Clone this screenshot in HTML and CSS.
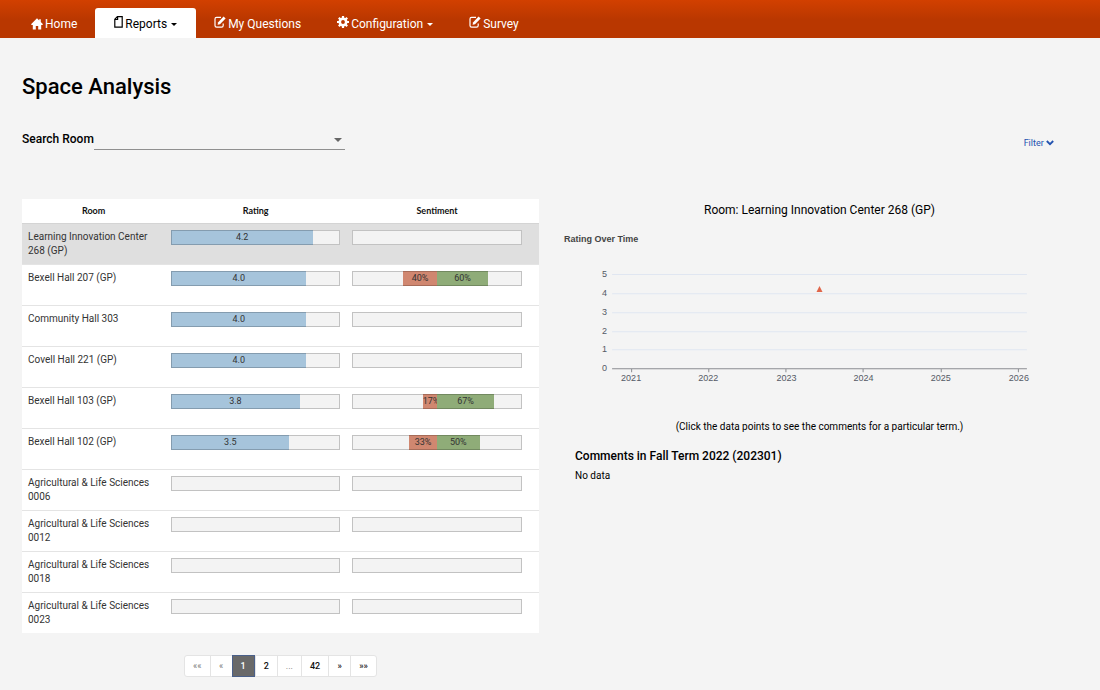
FILE: index.html
```html
<!DOCTYPE html>
<html lang="en">
<head>
    <meta charset="UTF-8">
    <meta name="viewport" content="width=device-width, initial-scale=1.0">
    <title>Space Analysis</title>
    <link rel="stylesheet" href="styles.css">
</head>
<body>
    <nav class="navbar">
        <a href="#">
            <svg class="icon" viewBox="0 0 12 12"><path d="M6 0.3 L0 6.2 L0.7 7 H1.8 V11.6 H4.8 V8 H7.2 V11.6 H10.2 V7 H11.3 L12 6.2 L9.8 4 V1.2 H8.2 V2.4 Z" fill="currentColor"/></svg>
            Home
        </a>
        <a href="#" class="active">
            <svg class="icon icon-file" viewBox="0 0 9 12"><path d="M3.4 0.7 H8.2 V11.2 H0.8 V3.3 Z M3.6 0.7 V3.5 H0.8" fill="none" stroke="currentColor" stroke-width="1.2"/></svg>
            Reports <span class="caret"></span>
        </a>
        <a href="#">
            <svg class="icon icon-edit" viewBox="0 0 12 12"><path d="M7 1.4 H2.6 Q1 1.4 1 3 V9.6 Q1 11.2 2.6 11.2 H7.6 Q9.2 11.2 9.2 9.6 V7.6" fill="none" stroke="currentColor" stroke-width="1.2"/><path d="M4 6.4 L9.6 0.6 L11.6 2.6 L6 8.2 L3.6 8.8 Z" fill="currentColor"/></svg>
            My Questions
        </a>
        <a href="#">
            <svg class="icon icon-cog" viewBox="0 0 12 12"><circle cx="6" cy="6" r="3.2" fill="none" stroke="currentColor" stroke-width="2.6"/><path d="M6 0 V2.6 M6 9.4 V12 M0 6 H2.6 M9.4 6 H12 M1.8 1.8 L3.6 3.6 M8.4 8.4 L10.2 10.2 M10.2 1.8 L8.4 3.6 M3.6 8.4 L1.8 10.2" stroke="currentColor" stroke-width="2.2"/></svg>
            Configuration <span class="caret"></span>
        </a>
        <a href="#">
            <svg class="icon icon-edit" viewBox="0 0 12 12"><path d="M7 1.4 H2.6 Q1 1.4 1 3 V9.6 Q1 11.2 2.6 11.2 H7.6 Q9.2 11.2 9.2 9.6 V7.6" fill="none" stroke="currentColor" stroke-width="1.2"/><path d="M4 6.4 L9.6 0.6 L11.6 2.6 L6 8.2 L3.6 8.8 Z" fill="currentColor"/></svg>
            Survey
        </a>
    </nav>

    <main class="container">
        <h1>Space Analysis</h1>

        <div class="toolbar">
            <div class="search">
                <label for="room">Search Room</label>
                <div class="select-wrap">
                    <select id="room">
                        <option value=""></option>
                    </select>
                    <span class="caret"></span>
                </div>
            </div>
            <a href="#" class="filter">Filter
                <svg viewBox="0 0 8 6"><path d="M0.8 1 L4 4.2 L7.2 1" fill="none" stroke="currentColor" stroke-width="1.8"/></svg>
            </a>
        </div>

        <div class="columns">
            <section>
                <table class="rooms">
                    <thead>
                        <tr><th class="col-room">Room</th><th class="col-rating">Rating</th><th>Sentiment</th></tr>
                    </thead>
                    <tbody>
                        <tr class="selected">
                            <td>Learning Innovation Center 268 (GP)</td>
                            <td><div class="bar"><div class="rating" style="width: 84%">4.2</div></div></td>
                            <td><div class="bar"></div></td>
                        </tr>
                        <tr>
                            <td>Bexell Hall 207 (GP)</td>
                            <td><div class="bar"><div class="rating" style="width: 80%">4.0</div></div></td>
                            <td><div class="bar"><div class="negative" style="width: 20%; margin-left: 30%">40%</div><div class="positive" style="width: 30%">60%</div></div></td>
                        </tr>
                        <tr>
                            <td>Community Hall 303</td>
                            <td><div class="bar"><div class="rating" style="width: 80%">4.0</div></div></td>
                            <td><div class="bar"></div></td>
                        </tr>
                        <tr>
                            <td>Covell Hall 221 (GP)</td>
                            <td><div class="bar"><div class="rating" style="width: 80%">4.0</div></div></td>
                            <td><div class="bar"></div></td>
                        </tr>
                        <tr>
                            <td>Bexell Hall 103 (GP)</td>
                            <td><div class="bar"><div class="rating" style="width: 76%">3.8</div></div></td>
                            <td><div class="bar"><div class="negative" style="width: 8.5%; margin-left: 41.5%">17%</div><div class="positive" style="width: 33.5%">67%</div></div></td>
                        </tr>
                        <tr>
                            <td>Bexell Hall 102 (GP)</td>
                            <td><div class="bar"><div class="rating" style="width: 70%">3.5</div></div></td>
                            <td><div class="bar"><div class="negative" style="width: 16.5%; margin-left: 33.5%">33%</div><div class="positive" style="width: 25%">50%</div></div></td>
                        </tr>
                        <tr>
                            <td>Agricultural &amp; Life Sciences 0006</td>
                            <td><div class="bar"></div></td>
                            <td><div class="bar"></div></td>
                        </tr>
                        <tr>
                            <td>Agricultural &amp; Life Sciences 0012</td>
                            <td><div class="bar"></div></td>
                            <td><div class="bar"></div></td>
                        </tr>
                        <tr>
                            <td>Agricultural &amp; Life Sciences 0018</td>
                            <td><div class="bar"></div></td>
                            <td><div class="bar"></div></td>
                        </tr>
                        <tr>
                            <td>Agricultural &amp; Life Sciences 0023</td>
                            <td><div class="bar"></div></td>
                            <td><div class="bar"></div></td>
                        </tr>
                    </tbody>
                </table>

                <div class="pagination">
                    <a href="#" class="muted">««</a>
                    <a href="#" class="muted">«</a>
                    <a href="#" class="current">1</a>
                    <a href="#">2</a>
                    <a href="#" class="muted">...</a>
                    <a href="#">42</a>
                    <a href="#">»</a>
                    <a href="#">»»</a>
                </div>
            </section>

            <section class="details">
                <h2>Room: Learning Innovation Center 268 (GP)</h2>
                <svg class="chart" viewBox="0 0 516 170">
                    <text class="chart-title" x="3" y="14">Rating Over Time</text>
                    <path class="grid" d="M51 46.5 H465 M51 65.5 H465 M51 84.5 H465 M51 103.5 H465 M51 121.5 H465"/>
                    <path class="axis" d="M51 140.5 H465 M70.5 140 V144 M147.5 140 V144 M224.5 140 V144 M301.5 140 V144 M379.5 140 V144 M456.5 140 V144"/>
                    <g text-anchor="end">
                        <text x="46" y="49">5</text>
                        <text x="46" y="68">4</text>
                        <text x="46" y="87">3</text>
                        <text x="46" y="106">2</text>
                        <text x="46" y="124">1</text>
                        <text x="46" y="143">0</text>
                    </g>
                    <g text-anchor="middle">
                        <text x="70" y="153">2021</text>
                        <text x="147" y="153">2022</text>
                        <text x="225" y="153">2023</text>
                        <text x="302" y="153">2024</text>
                        <text x="379" y="153">2025</text>
                        <text x="457" y="153">2026</text>
                    </g>
                    <path class="point" d="M258 58 L261 64 H255 Z"/>
                </svg>
                <p class="hint">(Click the data points to see the comments for a particular term.)</p>
                <div class="comments">
                    <h3>Comments in Fall Term 2022 (202301)</h3>
                    <p>No data</p>
                </div>
            </section>
        </div>
    </main>
</body>
</html>
```
FILE: styles.css
```css
* {
    box-sizing: border-box;
}
body {
    font-family: Roboto, "Liberation Sans", sans-serif;
    margin: 0;
    background-color: #f4f4f4;
    color: #000;
    font-size: 12px;
}
a {
    text-decoration: none;
}
.navbar {
    display: flex;
    height: 38px;
    padding: 8px 13px 0;
    background: linear-gradient(#d24000, #b93700 20px);
}
.navbar a {
    display: flex;
    align-items: center;
    gap: 2px;
    padding: 2px 18px 0;
    border-radius: 3px 3px 0 0;
    color: #fff;
}
.navbar a.active {
    padding: 2px 19px 0;
    background-color: #fff;
    color: #000;
}
.icon {
    width: 12px;
    height: 12px;
}
.icon-file {
    width: 9px;
    margin-bottom: 4px;
}
.icon-edit,
.icon-cog {
    margin-bottom: 4px;
}
.caret {
    border-top: 3px solid currentColor;
    border-left: 3px solid transparent;
    border-right: 3px solid transparent;
}
.navbar .caret {
    margin-left: 2px;
}
.container {
    padding: 36px 22px 12px;
}
h1 {
    margin: 0;
    font-size: 22px;
    font-weight: 500;
    line-height: 26px;
}
.toolbar {
    display: flex;
    justify-content: space-between;
    align-items: flex-end;
    margin: 28px 0 49px;
    padding-right: 24px;
}
.search {
    display: flex;
    width: 323px;
    height: 22px;
}
.search label {
    font-weight: 500;
    line-height: 23px;
}
.select-wrap {
    position: relative;
    flex: 1;
}
.select-wrap select {
    appearance: none;
    width: 100%;
    height: 22px;
    border: none;
    border-bottom: 1px solid #8f8f8f;
    background: transparent;
}
.select-wrap .caret {
    position: absolute;
    right: 3px;
    top: 10px;
    border-width: 4px 4px 0;
    color: #666;
    pointer-events: none;
}
.filter {
    color: #2353b0;
    font-size: 9px;
    line-height: 14px;
}
.filter svg {
    width: 8px;
    height: 6px;
}
.columns {
    display: grid;
    grid-template-columns: 1fr 1fr;
    gap: 22px;
}

/* Room list */
.rooms {
    width: 100%;
    border-collapse: separate;
    border-spacing: 0;
    table-layout: fixed;
    background-color: #fff;
    color: #333;
}
.rooms th {
    height: 25px;
    padding: 0 6px 2px;
    border-bottom: 1px solid #d4d4d4;
    color: #111;
    font-family: Lato, sans-serif;
    font-size: 9px;
    font-weight: bold;
}
.rooms td {
    height: 41px;
    padding: 6px;
    border-bottom: 1px solid #e4e4e4;
    font-size: 10px;
    line-height: 14px;
    vertical-align: top;
}
.rooms th:last-child,
.rooms td:last-child {
    padding-right: 17px;
}
.rooms tr:last-child td {
    height: 40px;
    border-bottom: none;
}
.rooms thead th {
    border-bottom: 1px solid #d4d4d4;
}
.col-room {
    width: 27.7%;
}
.col-rating {
    width: 35%;
}
.rooms .selected {
    background-color: #dfdfdf;
}
.bar {
    position: relative;
    display: flex;
    height: 15px;
    background-color: #f3f3f3;
    font-size: 9px;
    line-height: 15px;
    text-align: center;
}
.bar::after {
    content: "";
    position: absolute;
    inset: 0;
    border: 1px solid rgba(0, 0, 0, 0.2);
}
.bar div {
    overflow: hidden;
}
.rating {
    background-color: #a6c4db;
}
.negative {
    background-color: #d08770;
}
.positive {
    background-color: #8fac78;
}
.pagination {
    display: flex;
    width: max-content;
    margin: 22px auto 0;
    border: 1px solid #e4e4e4;
    border-radius: 3px;
    background-color: #fff;
}
.pagination a {
    min-width: 22px;
    padding: 0 8px;
    border-left: 1px solid #e4e4e4;
    color: #111;
    font-size: 9px;
    font-weight: 500;
    line-height: 20px;
    text-align: center;
}
.pagination a:first-child {
    border-left: none;
}
.pagination .muted {
    color: #777;
    font-weight: normal;
}
.pagination .current {
    margin: -1px 0;
    border: 1px solid #4a608a;
    background-color: #696969;
    color: #fff;
}

/* Selected room */
.details h2 {
    margin: 4px 0 11px;
    font-size: 12px;
    font-weight: normal;
    line-height: 14px;
    text-align: center;
}
.chart {
    display: block;
    width: 100%;
    font-family: "Liberation Sans", Arial, sans-serif;
    font-size: 9px;
    fill: #555a66;
}
.chart-title {
    font-weight: bold;
    fill: #444;
}
.grid {
    stroke: #e0e6f1;
}
.axis {
    stroke: #8a8c91;
}
.point {
    fill: #e0664a;
}
.hint {
    margin: 22px 0 0;
    font-size: 10px;
    line-height: 14px;
    text-align: center;
}
.comments {
    padding: 15px 14px;
}
.comments h3 {
    margin: 0 0 6px;
    font-size: 12px;
    font-weight: 500;
    line-height: 14px;
}
.comments p {
    margin: 0;
    font-size: 10px;
    line-height: 13px;
}

@media (max-width: 700px) {
    .columns {
        grid-template-columns: 1fr;
    }
}
```
